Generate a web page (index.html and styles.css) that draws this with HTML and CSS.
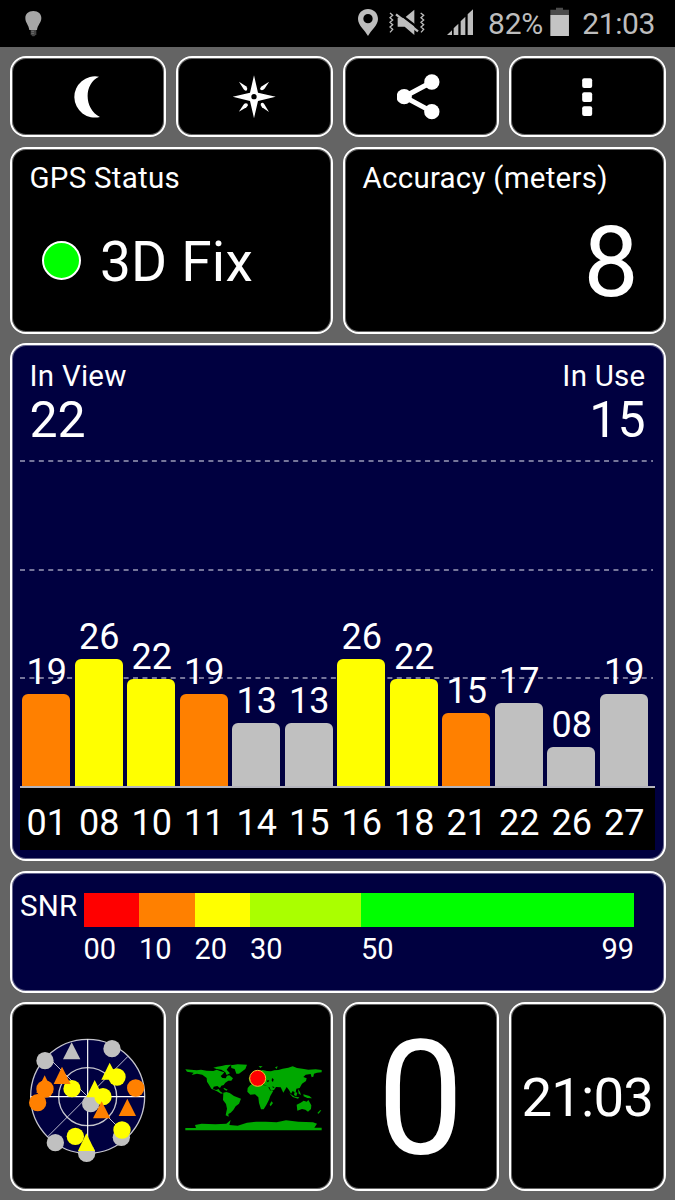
FILE: index.html
```html
<!DOCTYPE html>
<html lang="en">
<head>
<meta charset="utf-8">
<title>GPS Status</title>
<link rel="stylesheet" href="styles.css">
</head>
<body>
<header class="status">
  <svg class="bulb" viewBox="73 21 54 90" width="18" height="30"><path d="M101 33C86 33 77 42 77 54C77 69 87 74 89 90L112 90C114 74 125 69 125 54C125 42 116 33 101 33Z" fill="#a6a6a6"/><path d="M93 90H110V103L104 109H98L93 103Z" fill="#444"/><path d="M95 94H103M95 100H103" stroke="#888" stroke-width="2"/></svg>
  <svg class="pin" viewBox="54 21 60 90" width="20" height="30"><path fill-rule="evenodd" d="M84 27C67 27 54 40 54 57C54 76 75 91 84 108C93 91 114 76 114 57C114 40 101 27 84 27ZM84 42A14 14 0 1 1 84 70A14 14 0 1 1 84 42Z" fill="#bdbdbd"/></svg>
  <svg class="mute" viewBox="147 21 108 90" width="36" height="30"><path d="M150 39L158 46L150 53L158 60L150 67L158 74L150 81L158 88L150 97M242 39L251 46L243 53L251 60L243 67L251 74L243 81L251 88L243 97" fill="none" stroke="#bdbdbd" stroke-width="4"/><path d="M173 53H194L223 29V105L194 80H173Z" fill="#bdbdbd"/><path d="M176 39L240 88" stroke="#000" stroke-width="7"/><path d="M168 43L234 94" stroke="#bdbdbd" stroke-width="7"/></svg>
  <svg class="signal" viewBox="321 21 78 90" width="26" height="30"><path d="M321 105L336 91V105ZM341 85L355 71V105H341ZM362 64L376 50V105H362ZM383 43L399 28V105H383Z" fill="#bdbdbd"/></svg>
  <span class="pct">82%</span>
  <svg class="battery" viewBox="630 21 58 90" width="19.3" height="30"><path d="M648 23H669V29H687V46H631V29H648Z" fill="#4c4c4c"/><path d="M631 45H687V108H631Z" fill="#c4c4c4"/></svg>
  <span class="clock">21:03</span>
</header>
<main class="panels">
  <nav class="row tools">
    <button class="card" aria-label="Night mode"><svg viewBox="193 218 144 144" width="48" height="48"><path d="M298 229A62 62 0 1 0 301 350C252 325 252 250 298 229Z" fill="#fff"/></svg></button>
    <button class="card" aria-label="Compass"><svg viewBox="690 218 144 144" width="48" height="48"><g fill="#fff"><path fill-rule="evenodd" d="M762 225L774 277L827 289.500L774 302L762 354L750 302L698 289.500L750 277ZM762 281A8 8 0 1 0 762 297A8 8 0 1 0 762 281Z"/><path id="ray" d="M717 244L738 258Q745 264 741 270Q736 274 731 267Z"/><use href="#ray" transform="rotate(90 762 289.500)"/><use href="#ray" transform="rotate(180 762 289.500)"/><use href="#ray" transform="rotate(270 762 289.500)"/></g></svg></button>
    <button class="card" aria-label="Share"><svg viewBox="169.500 218 144 144" width="48" height="48"><path d="M274 245L191 289L274 334" fill="none" stroke="#fff" stroke-width="15"/><g fill="#fff"><circle cx="274" cy="245" r="23"/><circle cx="191" cy="289" r="23"/><circle cx="274" cy="334" r="23"/></g></svg></button>
    <button class="card" aria-label="More"><svg viewBox="668.500 218 144 144" width="48" height="48"><g fill="#fff"><rect x="726" y="234" width="30" height="29" rx="6"/><rect x="726" y="276" width="30" height="29" rx="6"/><rect x="726" y="318" width="30" height="29" rx="6"/></g></svg></button>
  </nav>
  <section class="row summary">
    <div class="card fix"><h2>GPS Status</h2><div class="fix-line"><i class="led"></i><span>3D Fix</span></div></div>
    <div class="card accuracy"><h2>Accuracy (meters)</h2><div class="meters">8</div></div>
  </section>
  <section class="card navy chart">
    <div class="counts"><div><h2>In View</h2><b>22</b></div><div class="right"><h2>In Use</h2><b>15</b></div></div>
    <div class="plot">
      <svg class="grid" width="635" height="331" viewBox="0 0 635 331"><path d="M0 6H633M0 115H633M0 223H633" stroke="#9c9cb8" stroke-width="1.500" stroke-dasharray="5 4.420"/></svg>
      <div class="bars">
        <div class="sat"><span>19</span><i class="orange" style="height:92px"></i></div>
        <div class="sat"><span>26</span><i class="yellow" style="height:127px"></i></div>
        <div class="sat"><span>22</span><i class="yellow" style="height:107px"></i></div>
        <div class="sat"><span>19</span><i class="orange" style="height:92px"></i></div>
        <div class="sat"><span>13</span><i class="gray" style="height:63px"></i></div>
        <div class="sat"><span>13</span><i class="gray" style="height:63px"></i></div>
        <div class="sat"><span>26</span><i class="yellow" style="height:127px"></i></div>
        <div class="sat"><span>22</span><i class="yellow" style="height:107px"></i></div>
        <div class="sat"><span>15</span><i class="orange" style="height:73px"></i></div>
        <div class="sat"><span>17</span><i class="gray" style="height:83px"></i></div>
        <div class="sat"><span>08</span><i class="gray" style="height:39px"></i></div>
        <div class="sat"><span>19</span><i class="gray" style="height:92px"></i></div>
      </div>
    </div>
    <div class="axis"><span>01</span><span>08</span><span>10</span><span>11</span><span>14</span><span>15</span><span>16</span><span>18</span><span>21</span><span>22</span><span>26</span><span>27</span></div>
  </section>
  <section class="card navy snr">
    <span class="snr-name">SNR</span>
    <div class="scale">
      <div class="seg"><i class="red"></i><span>00</span></div>
      <div class="seg"><i class="orange"></i><span>10</span></div>
      <div class="seg"><i class="yellow"></i><span>20</span></div>
      <div class="seg"><i class="lime"></i><span>30</span></div>
      <div class="seg last"><i class="green"></i><span>50</span><span>99</span></div>
    </div>
  </section>
  <section class="row tiles">
    <div class="card">
      <svg viewBox="0 -10 465 480" width="155" height="160">
        <circle cx="233" cy="228" r="171" fill="#000040" stroke="#c4c4cc" stroke-width="4"/>
        <circle cx="233" cy="229" r="87" fill="none" stroke="#c4c4cc" stroke-width="4"/>
        <path d="M233 57V399M62 229H404" stroke="#fff" stroke-width="3.500"/><path d="M112 108L354 350M354 108L112 350" stroke="#e0e0e8" stroke-width="2.500"/>
        <g fill="#c0c0c0"><circle cx="105" cy="121" r="26"/><circle cx="306" cy="85" r="26"/><path d="M185 66L211 117H159Z"/><circle cx="242" cy="250" r="26"/><circle cx="136" cy="367" r="26"/><circle cx="230" cy="399" r="26"/><circle cx="334" cy="351" r="26"/></g>
        <g fill="#ffff00"><circle cx="321" cy="170" r="26"/><path d="M299 127L326 178H274Z"/><circle cx="186" cy="205" r="26"/><circle cx="279" cy="229" r="26"/><path d="M254 179L280 231H229Z"/><circle cx="336" cy="329" r="26"/><circle cx="196" cy="348" r="26"/><path d="M229 339L255 392H204Z"/></g>
        <g fill="#ff8000"><path d="M156 139L182 191H131Z"/><path d="M104 165L130 217H79Z"/><circle cx="105" cy="206" r="26"/><circle cx="83" cy="247" r="26"/><circle cx="377" cy="203" r="26"/><path d="M352 235L378 287H326Z"/><path d="M275 243L301 294H249Z"/></g>
      </svg>
    </div>
    <div class="card">
      <svg viewBox="0 5 468 270" width="156" height="90">
        <g fill="#00a800">
          <path d="M28 57L62 60L75 58L92 61L112 62L122 58L132 62L145 66L140 72L134 77L139 83L149 84L153 76L160 75L171 84L166 91L157 91L148 97L143 104L136 106L132 113L124 107L113 109L111 116L120 119L128 116L132 123L141 129L135 130L123 123L106 115L98 102L93 94L92 83L79 73L63 70L47 74L53 67L33 64Z"/>
          <path d="M112 52L123 49L137 47L149 44L166 43L158 50L152 58L162 69L152 74L148 66L136 58L122 56Z"/>
          <path d="M165 45L185 42L213 43L208 56L197 64L189 70L181 70L176 56L166 53Z"/>
          <path d="M145 113L155 118L151 121L142 115ZM142 127L151 125L161 128L174 137L195 145L189 160L179 168L172 179L164 187L157 191L158 199L149 195L153 175L150 161L141 149Z"/>
          <path d="M222 105L231 99L248 100L261 104L274 106L281 120L292 121L283 137L279 148L271 164L263 177L255 177L249 158L247 141L237 132L223 133L214 124L215 113Z"/>
          <path d="M286 153L291 158L284 168L281 163Z"/>
          <path d="M218 84L225 77L241 65L260 59L273 62L285 63L295 60L307 59L320 55L337 52L350 48L363 53L379 55L397 58L419 57L437 59L437 66L423 67L414 70L412 79L407 81L404 71L389 73L382 80L392 84L390 92L378 100L371 113L361 115L359 127L350 122L345 130L339 119L332 110L322 127L314 111L300 110L294 119L281 122L273 107L259 101L246 98L232 100L222 97Z"/>
          <path d="M248 47L260 48L253 53ZM297 51L305 48L302 56ZM340 129L356 139L370 141L366 145L350 140ZM366 116L372 125L375 134L368 130ZM356 125L364 127L361 138L354 134ZM382 132L400 137L408 144L394 143L383 138Z"/>
          <path d="M362 163L374 157L383 151L392 154L397 149L406 165L405 176L396 184L388 178L378 176L364 181ZM432 180L436 180L428 190L424 188Z"/>
          <path d="M28 233H60L57 224L77 220L118 222L151 220L164 209L160 224L185 226L213 217L240 214L269 214L302 216L330 210L367 214L411 216L423 220L415 232H437V240H28Z"/>
        </g>
        <g fill="#000"><path d="M271 91L280 90L276 96ZM288 83L293 87L291 95L287 91ZM277 110L280 110L285 121L282 120ZM289 108L296 111L291 113Z"/></g>
        <circle cx="245" cy="84" r="24" fill="#f00" stroke="#f4c430" stroke-width="3"/>
      </svg>
    </div>
    <div class="card speed"><span>0</span></div>
    <div class="card time">21:03</div>
  </section>
</main>
</body>
</html>
```

FILE: styles.css
```css
* { box-sizing: border-box; }
body { margin: 0; width: 675px; height: 1200px; overflow: hidden; background: #646464; color: #fff; font-family: Roboto, sans-serif; }
svg { display: block; flex: none; }
h2 { margin: 0; font-size: 29.5px; line-height: 30px; font-weight: 400; letter-spacing: .25px; white-space: nowrap; }

.status { display: flex; align-items: flex-start; height: 47px; padding: 7px 0 0 24.3px; background: #000; color: #bdbdbd; font-size: 30px; line-height: 30px; }
.pin { margin-left: 315.7px; }
.mute { margin-left: 11px; }
.signal { margin-left: 22px; }
.pct { width: 62px; margin: 2px 0 0 15px; letter-spacing: -.2px; }
.clock { margin: 2px 0 0 13px; letter-spacing: -.4px; }

.panels { display: grid; grid-template-rows: 81px 187px 518px 122px 189px; row-gap: 9.5px; padding: 9px 9.5px; }
.row { display: grid; column-gap: 10px; }
.tools, .tiles { grid-template-columns: repeat(4, 1fr); }
.summary { grid-template-columns: 1fr 1fr; }
.card { min-width: 0; border: 2px solid #fff; border-radius: 16px; background: #000; color: #fff; overflow: hidden; box-shadow: inset 0 0 0 1px rgba(255, 255, 255, .4); }
.navy { background: #000040; }
.tools .card { display: flex; align-items: center; justify-content: center; padding: 0; }

.fix, .accuracy { padding: 14px 18px; }
.fix-line { display: flex; align-items: center; margin: 42px 0 0 12.5px; font-size: 55px; line-height: 54px; letter-spacing: .2px; }
.led { width: 39px; height: 39px; margin: -3px 19px 0 0; border: 2px solid #fff; border-radius: 50%; background: #0f0; }
.meters { margin-top: 21px; padding-right: 7px; text-align: right; font-size: 98px; line-height: 98px; }

.chart { padding: 15px 8px 0; }
.counts { display: flex; justify-content: space-between; height: 95px; padding: 1px 10px 0; }
.counts b { display: block; font-weight: 400; font-size: 50px; line-height: 50px; margin-top: 4px; }
.right { text-align: right; }
.plot { display: grid; width: 635px; height: 331px; }
.plot > * { grid-area: 1 / 1; }
.bars { display: flex; align-items: flex-end; gap: 4.5px; padding-left: 2.8px; }
.sat { width: 48px; text-align: center; font-size: 36px; line-height: 36px; }
.sat span { display: block; margin: 0 -1px 4px 0; }
.sat i { display: block; border-radius: 6px 6px 0 0; }
.axis { display: flex; gap: 4.5px; width: 635px; height: 64px; padding: 17px 0 0 3.3px; border-top: 2px solid #b4b4bc; background: #000; font-size: 36px; line-height: 36px; }
.axis span { width: 48px; text-align: center; }

.snr { display: flex; padding: 20px 28px 0 8.5px; }
.snr-name { width: 63.5px; margin-top: -1px; font-size: 29.5px; line-height: 29px; letter-spacing: .2px; }
.scale { display: grid; grid-template-columns: 55.500px 55.500px 55.500px 111px 273px; font-size: 29px; line-height: 29px; }
.seg i { display: block; height: 34px; margin-bottom: 8px; }
.last { display: grid; grid-template-columns: 1fr 1fr; grid-template-rows: 42px 29px; }
.last i { grid-column: 1 / 3; margin: 0; }
.last span + span { text-align: right; }
.red { background: #f00; }
.orange { background: #ff8000; }
.yellow { background: #ff0; }
.lime { background: #aaff00; }
.green { background: #0f0; }
.gray { background: #c0c0c0; }

.tiles .card { display: flex; align-items: center; justify-content: center; }
.speed { font-size: 159px; line-height: 159px; }
.speed span { margin-top: 4px; transform: scaleX(.97); }
.time { font-size: 54.5px; line-height: 54px; letter-spacing: -.8px; }
```
